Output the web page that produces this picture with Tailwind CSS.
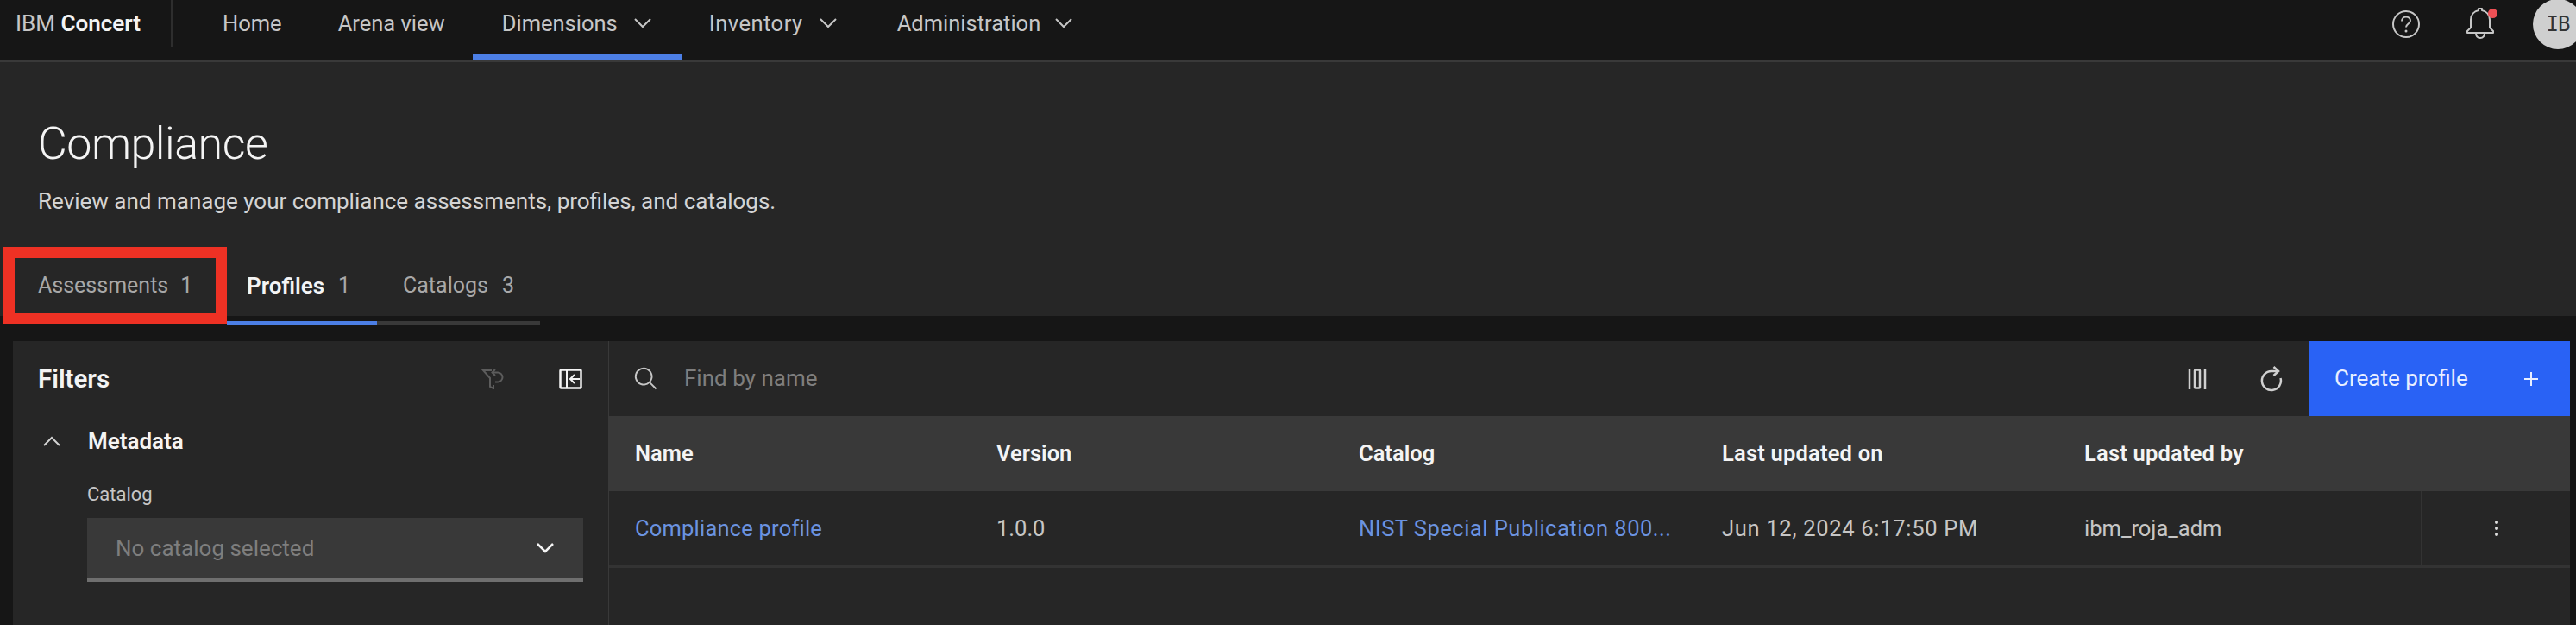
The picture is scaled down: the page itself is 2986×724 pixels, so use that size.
<!DOCTYPE html>
<html lang="en">
<head>
    <meta charset="UTF-8">
    <title>IBM Concert - Compliance</title>
    <script src="https://cdn.jsdelivr.net/npm/@tailwindcss/browser@4"></script>
</head>
<body class="relative h-[724px] overflow-hidden bg-[#161616] font-['Roboto',sans-serif] text-[#c6c6c6]">

    <!-- Top nav -->
    <header class="flex h-[72px] items-start border-b-[3px] border-[#393939] bg-[#161616]">
        <div class="flex h-[54px] w-[200px] items-center border-r-2 border-[#2e2e2e] pl-[18px] text-[26px] whitespace-nowrap">IBM&nbsp;<span class="font-semibold text-[#f4f4f4]">Concert</span></div>
        <nav class="ml-[25px] flex h-[69px] text-[25.500px]">
            <a class="flex items-center px-[33px] pb-[15px]">Home</a>
            <a class="flex items-center px-[32px] pb-[15px]">Arena view</a>
            <a class="flex w-[242px] items-center gap-[18px] border-b-[6px] border-[#4c7fe6] pb-[9px] pl-[34px]">Dimensions
                <svg class="h-[14px] w-[22px]" viewBox="0 0 22 14" fill="none" stroke="#c6c6c6" stroke-width="2"><path d="M2 2l9 9 9-9"/></svg>
            </a>
            <a class="flex w-[250px] items-center gap-[18px] pb-[15px] pl-[32px] tracking-[0.5px]">Inventory
                <svg class="h-[14px] w-[22px]" viewBox="0 0 22 14" fill="none" stroke="#c6c6c6" stroke-width="2"><path d="M2 2l9 9 9-9"/></svg>
            </a>
            <a class="flex items-center gap-[16px] pb-[15px]">Administration
                <svg class="h-[14px] w-[22px]" viewBox="0 0 22 14" fill="none" stroke="#c6c6c6" stroke-width="2"><path d="M2 2l9 9 9-9"/></svg>
            </a>
        </nav>
        <div class="ml-auto flex h-[56px] items-center">
            <svg class="mr-[52px] h-[34px] w-[34px]" viewBox="0 0 34 34" fill="none" stroke="#c6c6c6" stroke-width="2"><circle cx="17" cy="17" r="15"/><path d="M12 13.500c0-3 2.200-5 5-5s5 2 5 4.500c0 3.500-5 3.500-5 7.500"/><circle cx="17" cy="25" r="1.500" fill="#c6c6c6" stroke="none"/></svg>
            <div class="relative mr-[44px] h-[38px] w-[34px]">
                <svg class="h-[38px] w-[34px]" viewBox="0 0 34 38" fill="none" stroke="#c6c6c6" stroke-width="2"><path d="M2 29v-2l4-4v-9c0-6 4-10 9-11V1h4v2c5 1 9 5 9 11v9l4 4v2z" stroke-linejoin="round"/><path d="M12 29c0 4 2 6 5 6s5-2 5-6"/></svg>
                <span class="absolute top-[1px] right-[-3px] h-[11px] w-[11px] rounded-full bg-[#ee5055]"></span>
            </div>
            <div class="mr-[-8px] flex h-[58px] w-[58px] items-center justify-center rounded-full bg-[#cfcfcf] font-['DejaVu_Sans_Mono',monospace] text-[24px] tracking-[-1px] text-[#333]">IB</div>
        </div>
    </header>

    <!-- Page heading -->
    <section class="h-[294px] bg-[#262626] pl-[44px]">
        <h1 class="pt-[66px] text-[52px] leading-[58px] font-light tracking-[-0.5px] text-[#f4f4f4]">Compliance</h1>
        <p class="mt-[20px] text-[26px] leading-[34px] text-[#d4d4d4]">Review and manage your compliance assessments, profiles, and catalogs.</p>
        <div class="mt-[52px] ml-[-44px] flex h-[74px] text-[25px]">
            <div class="flex w-[263px] items-center gap-[14px] pb-[16px] pl-[44px] text-[#a8a8a8]">Assessments <span>1</span></div>
            <div class="flex w-[174px] items-center gap-[16px] border-b-4 border-[#4c7fe6] pb-[12px] pl-[23px] text-[26px] font-semibold text-[#f4f4f4]">Profiles <span class="text-[25px] font-normal text-[#a8a8a8]">1</span></div>
            <div class="flex w-[189px] items-center gap-[16px] border-b-4 border-[#393939] pb-[12px] pl-[30px] text-[#a8a8a8]">Catalogs <span>3</span></div>
        </div>
    </section>

    <!-- Content -->
    <main class="flex h-[358px] pt-[29px] pr-[7px] pl-[15px]">
        <aside class="w-[691px] shrink-0 border-r border-[#393939] bg-[#262626]">
            <div class="flex h-[88px] items-center pr-[30px] pl-[29px]">
                <h2 class="text-[29.500px] font-semibold text-[#f4f4f4]">Filters</h2>
                <svg class="mr-[64px] ml-auto h-[24px] w-[26px]" viewBox="0 0 26 24" fill="none" stroke="#5c5c5c" stroke-width="2"><path d="M12 2H2l8 9v10l4 2v-4"/><path d="M16 1l-3.500 3.500L16 8"/><path d="M13 4.500h6a5.500 5.500 0 0 1 0 11h-3"/></svg>
                <svg class="h-[24px] w-[27px]" viewBox="0 0 27 24" fill="none" stroke="#f4f4f4" stroke-width="2.500"><rect x="1.500" y="1.500" width="24" height="21" rx="1"/><path d="M9 1.500v21M24 12H13M18 7l-5 5 5 5" stroke-width="2"/></svg>
            </div>
            <div class="flex h-[56px] items-center pl-[35px] text-[26px] font-semibold text-[#f4f4f4]">
                <svg class="mr-[32px] h-[14px] w-[20px]" viewBox="0 0 20 14" fill="none" stroke="#d4d4d4" stroke-width="2"><path d="M1 12l9-9 9 9"/></svg>
                Metadata
            </div>
            <div class="pt-[20px] pl-[86px]">
                <label class="block text-[22px] leading-[28px] text-[#c6c6c6]">Catalog</label>
                <div class="mt-[13px] flex h-[74px] w-[575px] items-center justify-between border-b-4 border-[#6f6f6f] bg-[#393939] pr-[33px] pl-[33px] text-[26px] text-[#7e7e7e]">
                    No catalog selected
                    <svg class="h-[14px] w-[22px]" viewBox="0 0 22 14" fill="none" stroke="#f4f4f4" stroke-width="2.500"><path d="M2 2l9 9 9-9"/></svg>
                </div>
            </div>
        </aside>

        <div class="flex-1 bg-[#262626]">
            <div class="flex h-[87px] items-center bg-[#262626] pl-[28px]">
                <svg class="h-[30px] w-[30px]" viewBox="0 0 32 32" fill="#c6c6c6"><path d="M29 27.590l-7.550-7.550a11.020 11.020 0 1 0-1.410 1.410L27.590 29zM4 13a9 9 0 1 1 9 9 9.010 9.010 0 0 1-9-9z"/></svg>
                <span class="ml-[29px] text-[26px] text-[#7e7e7e]">Find by name</span>
                <svg class="mr-[61px] ml-auto h-[24px] w-[22px]" viewBox="0 0 22 24" fill="none" stroke="#d0d0d0" stroke-width="2.500"><path d="M2 0v24M20 0v24"/><rect x="8" y="1.500" width="6" height="21" rx="1"/></svg>
                <svg class="mr-[30px] h-[30px] w-[28px]" viewBox="0 0 28 30" fill="none" stroke="#d0d0d0" stroke-width="2.500"><path d="M24.500 14a11 11 0 1 1-10.500-8h8"/><path d="M16.500 1l5.500 5-5.500 5"/></svg>
                <button class="flex h-[87px] w-[302px] items-center justify-between bg-[#2962f5] pr-[36px] pl-[29px] text-[26px] text-[#e8eeff]">Create profile
                    <svg class="h-[18px] w-[18px]" viewBox="0 0 18 18" stroke="#e8eeff" stroke-width="2"><path d="M9 1v16M1 9h16"/></svg>
                </button>
            </div>

            <div class="grid h-[87px] grid-cols-[419px_420px_421px_420px_1fr] items-center bg-[#393939] pl-[30px] text-[25.500px] font-semibold text-[#f4f4f4]">
                <div>Name</div>
                <div>Version</div>
                <div>Catalog</div>
                <div class="tracking-[0.2px]">Last updated on</div>
                <div class="tracking-[0.2px]">Last updated by</div>
            </div>

            <div class="grid h-[89px] grid-cols-[419px_420px_421px_420px_390px_1fr] items-center border-b-[3px] border-[#333] pl-[30px] text-[25.500px] text-[#c6c6c6]">
                <div class="tracking-[0.2px] text-[#6b93e0]">Compliance profile</div>
                <div>1.0.0</div>
                <div class="tracking-[0.5px] whitespace-nowrap text-[#6b93e0]">NIST Special Publication 800...</div>
                <div class="tracking-[0.7px]">Jun 12, 2024 6:17:50 PM</div>
                <div>ibm_roja_adm</div>
                <div class="flex h-full items-center justify-center border-l-2 border-[#333]">
                    <svg class="h-[20px] w-[6px]" viewBox="0 0 6 20" fill="#e0e0e0"><circle cx="3" cy="3" r="2"/><circle cx="3" cy="10" r="2"/><circle cx="3" cy="17" r="2"/></svg>
                </div>
            </div>
        </div>
    </main>

    <!-- Red highlight drawn over the Assessments tab -->
    <div class="absolute top-[286px] left-[4px] h-[89px] w-[259px] border-[13px] border-[#ee3124]"></div>
</body>
</html>
